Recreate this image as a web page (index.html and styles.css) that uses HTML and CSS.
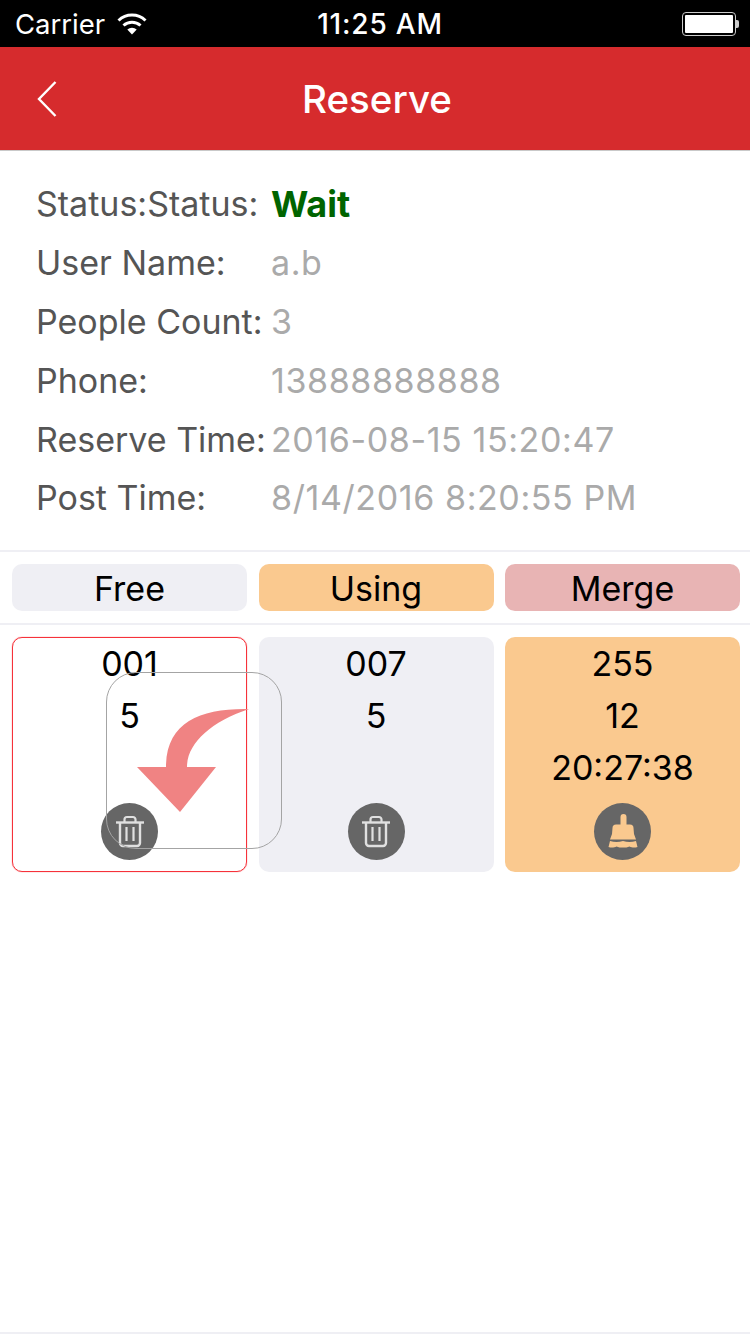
FILE: index.html
```html
<!DOCTYPE html>
<html lang="en">
<head>
    <meta charset="UTF-8">
    <meta name="viewport" content="width=device-width, initial-scale=1.0">
    <title>Reserve</title>
    <link rel="stylesheet" href="styles.css">
</head>
<body>
    <div class="status-bar">
        <div class="carrier">
            <span>Carrier</span>
            <svg class="wifi" width="30" height="23" viewBox="0 0 30 23">
                <path d="M15 22.500 10.300 17.500a7 7 0 0 1 9.400 0Z" fill="#fff"/>
                <path d="M6.500 13.500a12.500 12.500 0 0 1 17 0" fill="none" stroke="#fff" stroke-width="3"/>
                <path d="M1.500 8.500a19.500 19.500 0 0 1 27 0" fill="none" stroke="#fff" stroke-width="3"/>
            </svg>
        </div>
        <div class="clock">11:25 AM</div>
        <div class="battery">
            <div class="battery-body"><div class="battery-fill"></div></div>
            <div class="battery-tip"></div>
        </div>
    </div>

    <header class="nav-bar">
        <svg class="back" width="22" height="38" viewBox="0 0 22 38">
            <path d="M19.500 2 3 19l16.500 17" fill="none" stroke="#fff" stroke-width="2.400"/>
        </svg>
        <h1>Reserve</h1>
    </header>

    <section class="info">
        <div class="info-row"><span class="label">Status:Status:</span><span class="value wait">Wait</span></div>
        <div class="info-row"><span class="label">User Name:</span><span class="value">a.b</span></div>
        <div class="info-row"><span class="label">People Count:</span><span class="value">3</span></div>
        <div class="info-row"><span class="label">Phone:</span><span class="value">13888888888</span></div>
        <div class="info-row"><span class="label">Reserve Time:</span><span class="value">2016-08-15 15:20:47</span></div>
        <div class="info-row"><span class="label">Post Time:</span><span class="value">8/14/2016 8:20:55 PM</span></div>
    </section>

    <div class="legend">
        <div class="legend-item free">Free</div>
        <div class="legend-item using">Using</div>
        <div class="legend-item merge">Merge</div>
    </div>

    <div class="tables">
        <div class="table selected">
            <div class="table-line">001</div>
            <div class="table-line">5</div>
            <button class="round-btn">
                <svg width="32" height="34" viewBox="0 0 32 34"><use href="#trash"/></svg>
            </button>
        </div>
        <div class="table free">
            <div class="table-line">007</div>
            <div class="table-line">5</div>
            <button class="round-btn">
                <svg width="32" height="34" viewBox="0 0 32 34"><use href="#trash"/></svg>
            </button>
        </div>
        <div class="table using">
            <div class="table-line">255</div>
            <div class="table-line">12</div>
            <div class="table-line">20:27:38</div>
            <button class="round-btn">
                <svg width="34" height="36" viewBox="0 0 34 36">
                    <path d="M14.500 3a3 3 0 0 1 6 0V10.500h3.500a3.500 3.500 0 0 1 3.500 3.500L28 20 30 25.500H4L6 20 6.500 14a3.500 3.500 0 0 1 3.500-3.500h4.500Z" fill="#fac98f"/>
                    <path d="M4 27q6.500 2 13 0q6.500 2 13 0l1.500 6c-3 1-6 .5-8-.5-2 1-4 1-6.500 1s-4.500 0-6.500-1c-2 1-5 1.500-8 .5Z" fill="#fac98f"/>
                </svg>
            </button>
        </div>
    </div>

    <!-- drag hint over the first table -->
    <div class="drag-hint">
        <svg width="176" height="177" viewBox="0 0 176 177">
            <path d="M143 37C95 36 60 50 60 95H31L74 140 110 95H81C81 72 104 50 143 37Z" fill="#f08383"/>
        </svg>
    </div>

    <div class="bottom-line"></div>

    <svg class="icon-defs" width="0" height="0">
        <symbol id="trash" viewBox="0 0 32 34">
            <path d="M2 7.500h28" fill="none" stroke="#e0e0e0" stroke-width="2.400"/>
            <path d="M10.500 7V4.500a2.500 2.500 0 0 1 2.500-2.500h6a2.500 2.500 0 0 1 2.500 2.500V7" fill="none" stroke="#e0e0e0" stroke-width="2.200"/>
            <path d="M6 8v20a3 3 0 0 0 3 3h14a3 3 0 0 0 3-3V8" fill="none" stroke="#e0e0e0" stroke-width="2.400"/>
            <path d="M12.500 12v14M19.500 12v14" fill="none" stroke="#e0e0e0" stroke-width="2.200"/>
        </symbol>
    </svg>
</body>
</html>
```
FILE: styles.css
```css
body {
    font-family: Inter, "Liberation Sans", sans-serif;
    margin: 0;
    padding: 0;
    background-color: #fff;
    height: 1334px;
    position: relative;
    overflow: hidden;
}

.status-bar {
    height: 47px;
    background-color: #000;
    color: #fff;
    display: flex;
    align-items: center;
    justify-content: space-between;
    padding: 0 11px 0 15px;
    font-size: 27.500px;
    position: relative;
}

.carrier {
    display: flex;
    align-items: center;
    gap: 12px;
}

.clock {
    position: absolute;
    left: 10px;
    right: 0;
    text-align: center;
    font-weight: 500;
    font-size: 28px;
    letter-spacing: 0.800px;
}

.battery {
    display: flex;
    align-items: center;
}

.battery-body {
    width: 48px;
    height: 18px;
    border: 1px solid #ccc;
    border-radius: 4px;
    padding: 2px;
}

.battery-fill {
    height: 100%;
    background-color: #fff;
    border-radius: 1px;
}

.battery-tip {
    width: 3px;
    height: 8px;
    background-color: #ccc;
    border-radius: 0 2px 2px 0;
}

.nav-bar {
    height: 104px;
    box-sizing: border-box;
    background-color: #d62b2d;
    border-bottom: 1px solid #c9c9c9;
    display: flex;
    align-items: center;
    justify-content: center;
    padding-left: 4px;
    position: relative;
}

.nav-bar h1 {
    margin: 0;
    color: #fff;
    font-size: 38.500px;
    font-weight: 500;
}

.back {
    position: absolute;
    left: 36px;
    top: 33px;
}

.info {
    height: 401px;
    padding: 23.500px 0 0 36px;
    box-sizing: border-box;
    border-bottom: 2px solid #efeff4;
}

.info-row {
    display: flex;
    align-items: center;
    height: 58.800px;
    font-size: 34px;
}

.label {
    width: 235px;
    color: #555;
    white-space: nowrap;
}

.value {
    color: #aaa;
    letter-spacing: 0.600px;
}

.value.wait {
    color: #006400;
    font-weight: 700;
    font-size: 36px;
    letter-spacing: 0;
}

.legend {
    display: grid;
    grid-template-columns: repeat(3, 235px);
    column-gap: 11.500px;
    padding: 12px;
    border-bottom: 2px solid #efeff4;
}

.legend-item {
    height: 47px;
    line-height: 49px;
    border-radius: 10px;
    text-align: center;
    font-size: 34px;
    color: #000;
}

.free {
    background-color: #efeff4;
}

.using {
    background-color: #fac98f;
}

.merge {
    background-color: #e8b4b4;
}

.tables {
    display: grid;
    grid-template-columns: repeat(3, 235px);
    column-gap: 11.500px;
    padding: 12px;
}

.table {
    height: 235px;
    box-sizing: border-box;
    border-radius: 10px;
    text-align: center;
    font-size: 34px;
    color: #000;
    padding-top: 1px;
    position: relative;
}

.table.selected {
    border: 1px solid #f6323a;
    box-shadow: 0 0 1px #f6323a;
    padding-top: 0;
}

.table-line {
    height: 52px;
    line-height: 52px;
}

.round-btn {
    position: absolute;
    left: 50%;
    bottom: 12px;
    margin-left: -28.500px;
    width: 57px;
    height: 57px;
    border: none;
    border-radius: 50%;
    background-color: #666;
    padding: 0;
    display: flex;
    align-items: center;
    justify-content: center;
}

.table.selected .round-btn {
    bottom: 11px;
}

.drag-hint {
    position: absolute;
    left: 106px;
    top: 672px;
    width: 176px;
    height: 177px;
    box-sizing: border-box;
    border: 1px solid #a4a4a4;
    border-radius: 30px;
}

.drag-hint svg {
    position: absolute;
    left: -1px;
    top: -1px;
}

.bottom-line {
    position: absolute;
    left: 0;
    right: 0;
    bottom: 0;
    height: 2px;
    background-color: #efeff4;
}

.icon-defs {
    position: absolute;
}
```
